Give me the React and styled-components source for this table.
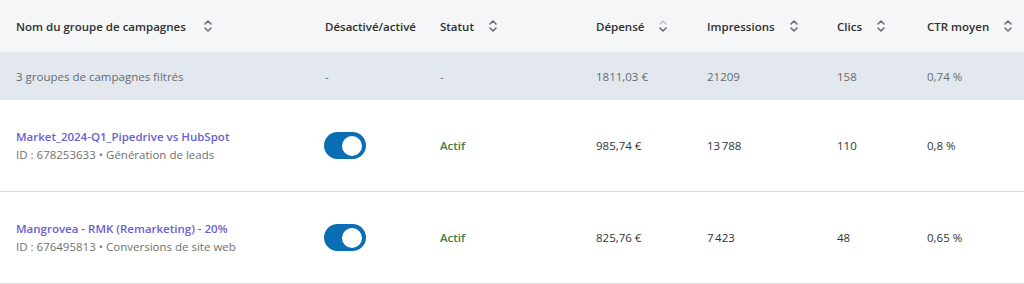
import React from 'react';
import styled, { createGlobalStyle } from 'styled-components';

const GlobalStyle = createGlobalStyle`
  body {
    margin: 0;
    background: #ffffff;
    font-family: "Open Sans", "Noto Sans", sans-serif;
    font-size: 11.5px;
    color: #333333;
  }
`;

const COLS = '309px 115px 156px 111px 130px 90px 1fr';

const Table = styled.div`
  width: 1024px;
`;

const Row = styled.div`
  display: grid;
  grid-template-columns: ${COLS};
  align-items: center;
  padding-left: 16px;
  height: ${p => p.h}px;
  background: ${p => p.bg || '#ffffff'};
  border-bottom: ${p => (p.line ? '1px solid #dcdcdc' : 'none')};
`;

const HeadCell = styled.div`
  display: flex;
  align-items: center;
  gap: ${p => p.gap || 14}px;
  font-weight: 600;
  color: #2f2f2f;
  white-space: nowrap;
`;

const SumCell = styled.div`
  color: #666a70;
  white-space: nowrap;
`;

const Cell = styled.div`
  color: #333333;
  white-space: nowrap;
`;

const NameBlock = styled.div`
  display: flex;
  flex-direction: column;
  gap: 3px;
`;

const NameLink = styled.a`
  color: #6a60d0;
  font-weight: 600;
  text-decoration: none;
`;

const SubText = styled.span`
  color: #707070;
`;

const Status = styled.span`
  color: #3f7d3a;
  font-weight: 600;
`;

const Toggle = styled.div`
  width: 42px;
  height: 27px;
  border-radius: 14px;
  background: #0a6eb4;
  display: flex;
  align-items: center;
  justify-content: flex-end;
  padding-right: 4px;
  box-sizing: border-box;
  margin-left: -1px;
`;

const Knob = styled.span`
  width: 20px;
  height: 20px;
  border-radius: 50%;
  background: #ffffff;
`;

const SortIcon = ({ active }) => (
  <svg width="10" height="14" viewBox="0 0 10 14" fill="none">
    <path d="M2 5 L5 2 L8 5" stroke={active ? '#c4c7cc' : '#6a6d72'} strokeWidth="1.6" strokeLinecap="round" strokeLinejoin="round" />
    <path d="M2 9 L5 12 L8 9" stroke="#6a6d72" strokeWidth="1.6" strokeLinecap="round" strokeLinejoin="round" />
  </svg>
);

const rows = [
  {
    name: 'Market_2024-Q1_Pipedrive vs HubSpot',
    sub: 'ID : 678253633 • Génération de leads',
    spent: '985,74 €',
    imp: '13\u202F788',
    clics: '110',
    ctr: '0,8 %',
  },
  {
    name: 'Mangrovea - RMK (Remarketing) - 20%',
    sub: 'ID : 676495813 • Conversions de site web',
    spent: '825,76 €',
    imp: '7\u202F423',
    clics: '48',
    ctr: '0,65 %',
  },
];

export default function App() {
  return (
    <Table>
      <GlobalStyle />
      <Row h={52} bg="#f5f6f8">
        <HeadCell gap={17}>Nom du groupe de campagnes <SortIcon /></HeadCell>
        <HeadCell>Désactivé/activé</HeadCell>
        <HeadCell>Statut <SortIcon /></HeadCell>
        <HeadCell>Dépensé <SortIcon active /></HeadCell>
        <HeadCell>Impressions <SortIcon /></HeadCell>
        <HeadCell>Clics <SortIcon /></HeadCell>
        <HeadCell>CTR moyen <SortIcon /></HeadCell>
      </Row>
      <Row h={48} bg="#e3e8ee">
        <SumCell>3 groupes de campagnes filtrés</SumCell>
        <SumCell>-</SumCell>
        <SumCell>-</SumCell>
        <SumCell>1811,03 €</SumCell>
        <SumCell>21209</SumCell>
        <SumCell>158</SumCell>
        <SumCell>0,74 %</SumCell>
      </Row>
      {rows.map(r => (
        <Row key={r.name} h={91} line>
          <NameBlock>
            <NameLink href="#">{r.name}</NameLink>
            <SubText>{r.sub}</SubText>
          </NameBlock>
          <Toggle><Knob /></Toggle>
          <Status>Actif</Status>
          <Cell>{r.spent}</Cell>
          <Cell>{r.imp}</Cell>
          <Cell>{r.clics}</Cell>
          <Cell>{r.ctr}</Cell>
        </Row>
      ))}
    </Table>
  );
}
